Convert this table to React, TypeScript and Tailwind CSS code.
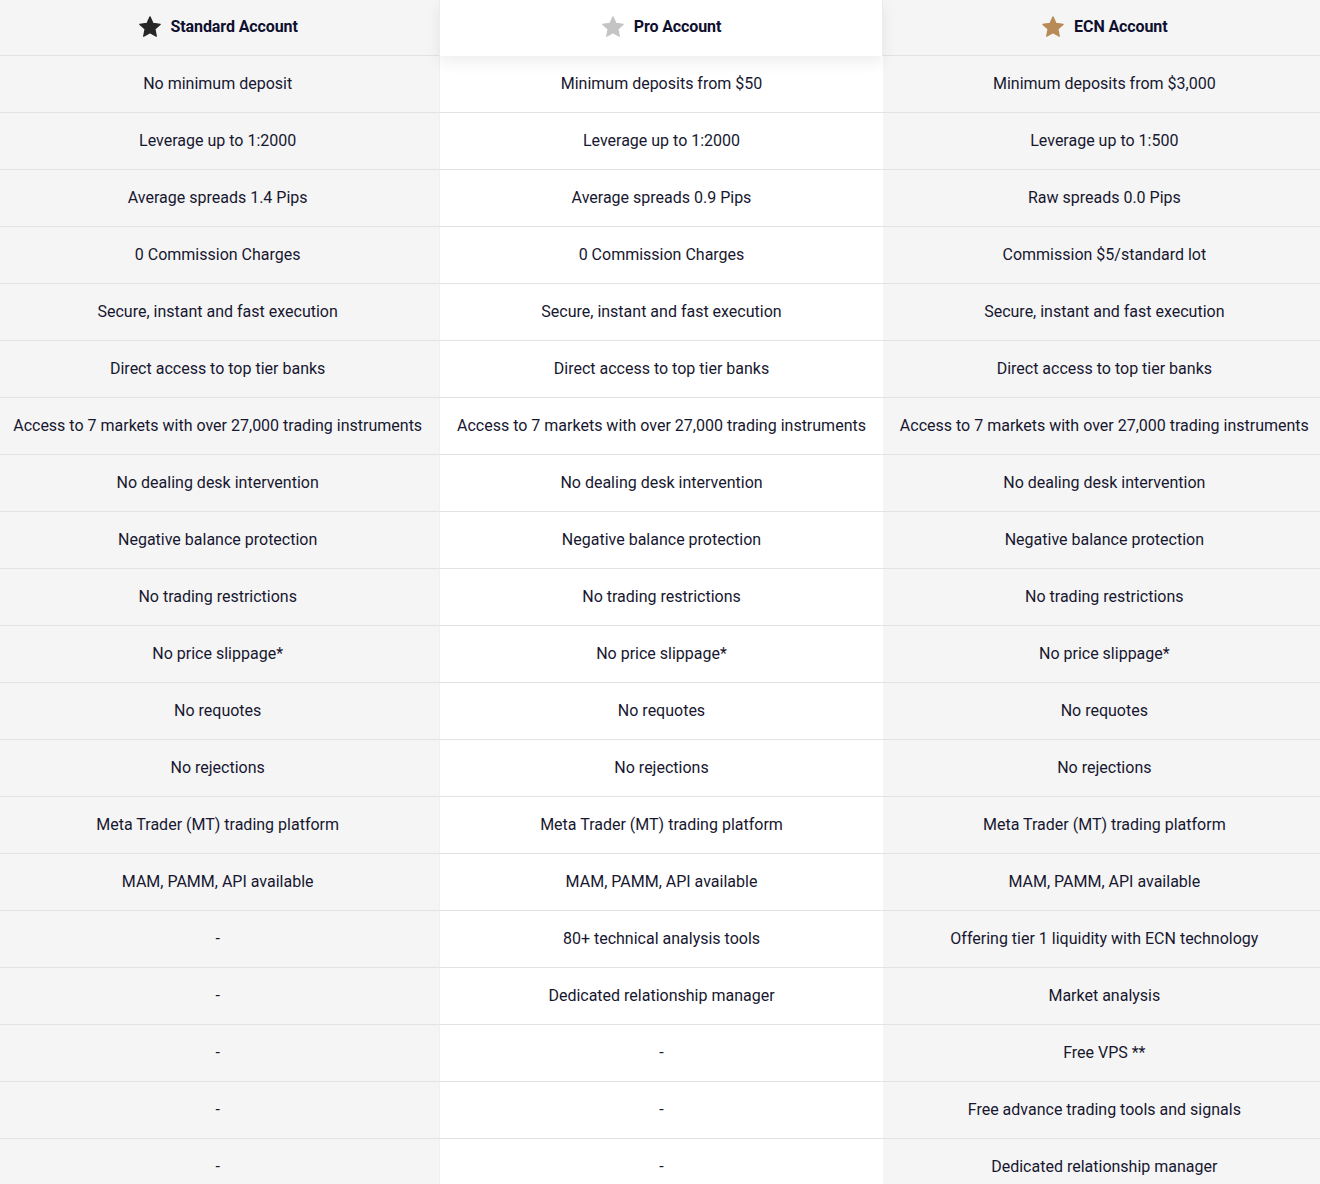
import React from "react";

const rows: [string, string, string][] = [
  ["No minimum deposit", "Minimum deposits from $50", "Minimum deposits from $3,000"],
  ["Leverage up to 1:2000", "Leverage up to 1:2000", "Leverage up to 1:500"],
  ["Average spreads 1.4 Pips", "Average spreads 0.9 Pips", "Raw spreads 0.0 Pips"],
  ["0 Commission Charges", "0 Commission Charges", "Commission $5/standard lot"],
  ["Secure, instant and fast execution", "Secure, instant and fast execution", "Secure, instant and fast execution"],
  ["Direct access to top tier banks", "Direct access to top tier banks", "Direct access to top tier banks"],
  [
    "Access to 7 markets with over 27,000 trading instruments",
    "Access to 7 markets with over 27,000 trading instruments",
    "Access to 7 markets with over 27,000 trading instruments",
  ],
  ["No dealing desk intervention", "No dealing desk intervention", "No dealing desk intervention"],
  ["Negative balance protection", "Negative balance protection", "Negative balance protection"],
  ["No trading restrictions", "No trading restrictions", "No trading restrictions"],
  ["No price slippage*", "No price slippage*", "No price slippage*"],
  ["No requotes", "No requotes", "No requotes"],
  ["No rejections", "No rejections", "No rejections"],
  ["Meta Trader (MT) trading platform", "Meta Trader (MT) trading platform", "Meta Trader (MT) trading platform"],
  ["MAM, PAMM, API available", "MAM, PAMM, API available", "MAM, PAMM, API available"],
  ["-", "80+ technical analysis tools", "Offering tier 1 liquidity with ECN technology"],
  ["-", "Dedicated relationship manager", "Market analysis"],
  ["-", "-", "Free VPS **"],
  ["-", "-", "Free advance trading tools and signals"],
  ["-", "-", "Dedicated relationship manager"],
];

function Star({ color }: { color: string }) {
  return (
    <svg width="24" height="24" viewBox="0 0 24 24" aria-hidden>
      <path
        d="M12 1.8l3.05 6.6 7.2.85-5.33 4.92 1.43 7.1L12 17.7l-6.35 3.57 1.43-7.1L1.75 9.25l7.2-.85z"
        fill={color}
        stroke={color}
        strokeWidth="1.2"
        strokeLinejoin="round"
      />
    </svg>
  );
}

const headers: { label: string; color: string }[] = [
  { label: "Standard Account", color: "#262626" },
  { label: "Pro Account", color: "#c4c4c4" },
  { label: "ECN Account", color: "#b88a58" },
];

export default function App() {
  return (
    <div
      className="w-[1320px] h-[1184px] overflow-hidden bg-[#f5f5f6] text-[#17172f]"
      style={{ fontFamily: "Roboto, 'Noto Sans', sans-serif" }}
    >
      <div className="ml-[-4px] w-[1330px]">
        {/* header */}
        <div className="grid grid-cols-3 h-[56px]">
          {headers.map((h, i) => (
            <div
              key={h.label}
              className={
                i === 1
                  ? "relative z-10 flex items-center justify-center gap-[9px] bg-white h-[56px] pb-[3px] border-x border-[#ececec] shadow-[0_6px_14px_rgba(0,0,0,0.07)]"
                  : "flex items-center justify-center gap-[9px] h-[56px] pb-[2px] border-b border-[#e2e2e2]"
              }
            >
              <Star color={h.color} />
              <span className="text-[16px] font-bold text-[#0f0f2e] tracking-[-0.1px]">{h.label}</span>
            </div>
          ))}
        </div>
        {rows.map((r, ri) => (
          <div key={ri} className="grid grid-cols-3 h-[57px]">
            {r.map((c, ci) => (
              <div
                key={ci}
                className={
                  "flex items-center justify-center h-[57px] border-b border-[#e2e2e2] text-[16px] leading-none whitespace-nowrap " +
                  (ci === 1 ? "bg-white border-l border-l-[#f0f0f0]" : "")
                }
              >
                {c}
              </div>
            ))}
          </div>
        ))}
      </div>
    </div>
  );
}
